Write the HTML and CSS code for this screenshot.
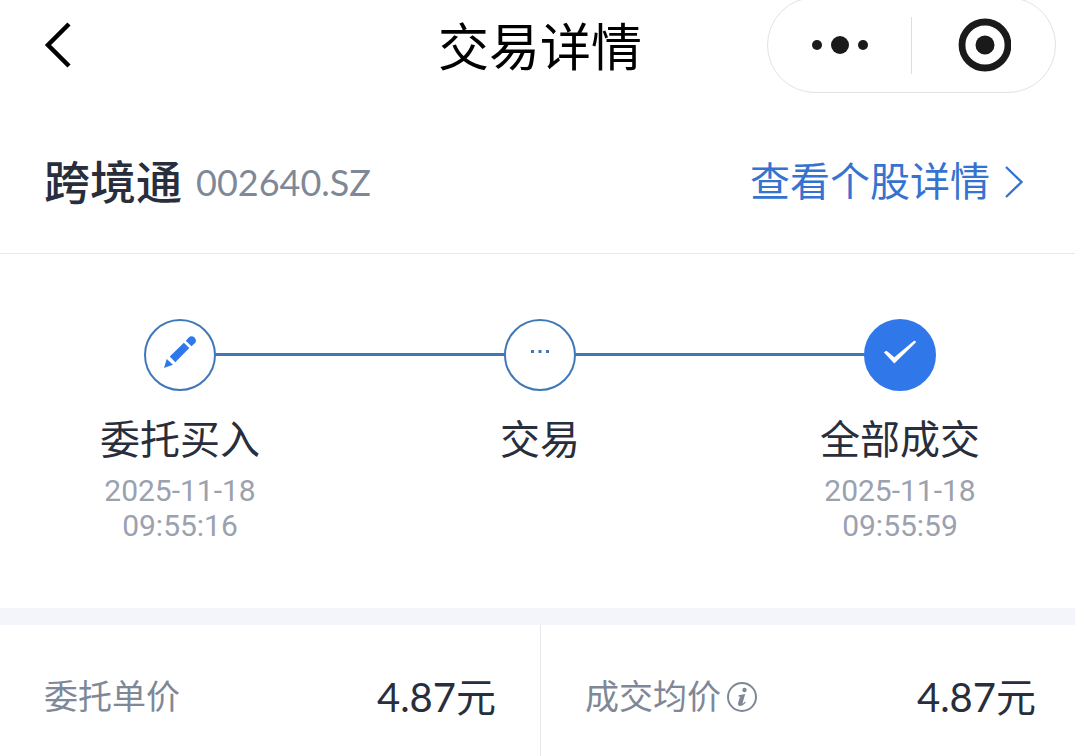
FILE: index.html
```
<!DOCTYPE html>
<html lang="zh-CN">
<head>
  <meta charset="UTF-8" />
  <meta name="viewport" content="width=device-width, initial-scale=1" />
  <title>交易详情</title>
  <link rel="stylesheet" href="styles.css">
</head>
<body>
  <div class="page">

    <!-- Top bar -->
    <header class="navbar">
      <button class="back" aria-label="返回">
        <svg width="28" height="48" viewBox="0 0 28 48" fill="none" stroke="#000" stroke-width="4.500">
          <path d="M25 3 4 24 25 45" />
        </svg>
      </button>
      <h1 class="title">交易详情</h1>
      <div class="capsule">
        <button class="capsule-btn" aria-label="更多">
          <svg width="58" height="20" viewBox="0 0 58 20" fill="#1a1a1a">
            <circle cx="6" cy="10" r="5" />
            <circle cx="29" cy="10" r="9" />
            <circle cx="52" cy="10" r="5" />
          </svg>
        </button>
        <span class="capsule-line"></span>
        <button class="capsule-btn" aria-label="关闭">
          <svg width="54" height="54" viewBox="0 0 54 54">
            <circle cx="28" cy="27" r="23" fill="none" stroke="#1a1a1a" stroke-width="6.800" />
            <circle cx="28" cy="27" r="9.500" fill="#1a1a1a" />
          </svg>
        </button>
      </div>
    </header>

    <!-- Stock -->
    <section class="stock">
      <h2 class="stock-name">跨境通</h2>
      <span class="stock-code">002640.SZ</span>
      <a class="stock-link" href="#">
        查看个股详情
        <svg width="20" height="34" viewBox="0 0 20 34" fill="none" stroke="#3673d0" stroke-width="2.400">
          <path d="M2 2 17.500 17 2 32" />
        </svg>
      </a>
    </section>

    <!-- Progress -->
    <ol class="steps">
      <li class="step">
        <span class="dot">
          <svg width="34" height="34" viewBox="0 0 34 34" fill="#3078ea">
            <path d="M1 33 3.700 24 10 29.800z" />
            <path d="M6.800 21.500 20.800 7.700 26.300 13 12.300 27.300z" />
            <path d="M22.800 5.700 25.500 2.800Q28.500 0 31.500 2.600 34.500 6 31.500 8.500L28.500 11.200z" />
          </svg>
        </span>
        <span class="step-name">委托买入</span>
        <time class="step-time">2025-11-18<br>09:55:16</time>
      </li>
      <li class="step">
        <span class="dot">
          <svg width="18" height="4" viewBox="0 0 18 4" fill="#3f76b8">
            <path d="M0 0h3v3H0zM7.500 0h3v3h-3zM15 0h3v3h-3z" />
          </svg>
        </span>
        <span class="step-name">交易</span>
      </li>
      <li class="step">
        <span class="dot done">
          <svg width="34" height="26" viewBox="0 0 34 26" fill="#fff">
            <path d="M1 13.500Q2 11.500 3.800 12L11.300 18.200 30.800 2Q32.500 1.200 33 3.200L11.300 24.500z" />
          </svg>
        </span>
        <span class="step-name">全部成交</span>
        <time class="step-time">2025-11-18<br>09:55:59</time>
      </li>
    </ol>

    <!-- Prices -->
    <dl class="prices">
      <div class="price">
        <dt>委托单价</dt>
        <dd>4.87元</dd>
      </div>
      <div class="price">
        <dt>
          成交均价
          <button class="info" aria-label="说明">
            <svg width="32" height="32" viewBox="0 0 32 32">
              <circle cx="16" cy="16" r="14" fill="none" stroke="#7f8897" stroke-width="2" />
              <circle cx="18.500" cy="9" r="2.200" fill="#7f8897" />
              <path d="M12.500 14.200 19.200 13 16.600 22Q16.400 23.500 19 20.500L19.700 21.200Q17 25 14 25 11.400 24.800 12.200 21.800L14 15.500H12.500z" fill="#7f8897" />
            </svg>
          </button>
        </dt>
        <dd>4.87元</dd>
      </div>
    </dl>

  </div>
</body>
</html>
```
FILE: styles.css
```
* {
  box-sizing: border-box;
}

body {
  margin: 0;
  overflow-x: hidden;
  background: #fff;
  color: #282e3c;
  font-family: Roboto, "Noto Sans CJK SC", sans-serif;
}

h1, h2, ol, dl, dd {
  margin: 0;
  padding: 0;
}

button {
  padding: 0;
  border: none;
  background: none;
  cursor: pointer;
}

svg {
  display: block;
}

.page {
  display: flex;
  flex-direction: column;
  min-height: 100vh;
  margin-right: -5px;
}

/* top bar */
.navbar {
  display: grid;
  grid-template-columns: 1fr auto 1fr;
  grid-template-rows: 90px;
  align-items: center;
  padding: 0 24px;
}

.back {
  justify-self: start;
  margin-left: 20px;
}

.title {
  padding-top: 8px;
  color: #000;
  font-size: 51px;
  font-weight: 400;
  line-height: 60px;
}

.capsule {
  display: flex;
  align-items: center;
  justify-self: end;
  width: 289px;
  height: 96px;
  border: 1px solid #e2e2e2;
  border-radius: 48px;
}

.capsule-btn {
  display: flex;
  flex: 1;
  justify-content: center;
}

.capsule-line {
  width: 1px;
  height: 57px;
  background: #dedede;
}

/* stock */
.stock {
  display: flex;
  align-items: center;
  height: 164px;
  padding: 14px 56px 0 44px;
  border-bottom: 1px solid #e4e9ea;
}

.stock-name {
  font-size: 46px;
  font-weight: 500;
}

.stock-code {
  padding-top: 6px;
  margin-left: 14px;
  color: #7f8897;
  font-family: Lato, sans-serif;
  font-size: 36px;
}

.stock-link {
  display: flex;
  align-items: center;
  gap: 14px;
  margin-left: auto;
  color: #3673d0;
  font-size: 40px;
  text-decoration: none;
}

.stock-link svg {
  margin-top: 6px;
}

/* progress */
.steps {
  display: grid;
  grid-template-columns: repeat(3, 1fr);
  padding: 65px 0;
  border-bottom: 17px solid #f4f5fa;
  list-style: none;
}

.step {
  position: relative;
  display: flex;
  flex-direction: column;
  align-items: center;
}

.step + .step::before {
  content: "";
  position: absolute;
  top: 34px;
  right: 50%;
  width: 100%;
  height: 3px;
  background: #3f78b8;
}

.dot {
  z-index: 1;
  display: flex;
  align-items: center;
  justify-content: center;
  width: 72px;
  height: 72px;
  padding-bottom: 6px;
  border: 2px solid #3f78b8;
  border-radius: 50%;
  background: #fff;
}

.dot.done {
  border-color: #3078ea;
  background: #3078ea;
}

.step-name {
  margin-top: 20px;
  font-size: 40px;
  line-height: 60px;
}

.step-time {
  margin-top: 2px;
  color: #9aa1af;
  font-size: 30px;
  line-height: 35px;
  text-align: center;
}

/* prices */
.prices {
  display: grid;
  flex: 1;
  grid-template-columns: 1fr 1fr;
}

.price {
  display: flex;
  align-items: flex-start;
  justify-content: space-between;
  padding: 42px 44px;
  line-height: 60px;
}

.price + .price {
  border-left: 1px solid #e6e9ec;
}

.price dt {
  display: flex;
  align-items: center;
  gap: 5px;
  color: #7f8897;
  font-size: 34px;
}

.price dd {
  font-family: Lato, "Noto Sans CJK SC", sans-serif;
  font-size: 40px;
}
```
